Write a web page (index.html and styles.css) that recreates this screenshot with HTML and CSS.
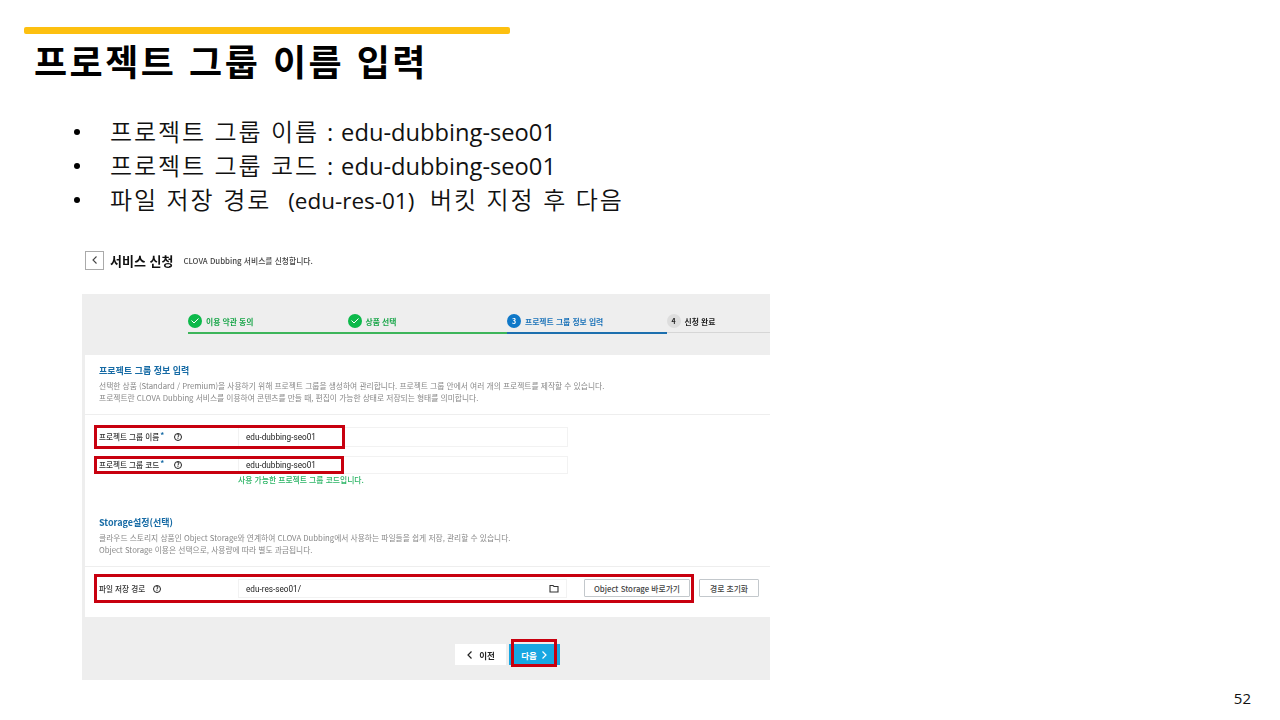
FILE: index.html
```html
<!DOCTYPE html>
<html lang="ko">
<head>
<meta charset="utf-8">
<title>프로젝트 그룹 이름 입력</title>
<link rel="stylesheet" href="styles.css">
</head>
<body>
<main class="slide">
  <div class="accent"></div>
  <h1 class="title">프로젝트 그룹 이름 입력</h1>
  <ul class="points">
    <li>프로젝트 그룹 이름<span class="latin colon">:</span><span class="latin">edu-dubbing-seo01</span></li>
    <li>프로젝트 그룹 코드<span class="latin colon">:</span><span class="latin">edu-dubbing-seo01</span></li>
    <li>파일 저장 경로<span class="latin paren">(edu-res-01)</span> 버킷 지정 후 다음</li>
  </ul>

  <section class="shot">
    <header class="shot-head">
      <span class="back"><svg width="10" height="10" viewBox="0 0 10 10"><path d="M6.5 1.5 3 5l3.5 3.5" fill="none" stroke="#444" stroke-width="1.1"/></svg></span>
      <strong class="shot-title">서비스 신청</strong>
      <span class="shot-sub">CLOVA Dubbing 서비스를 신청합니다.</span>
    </header>

    <div class="panel">
      <ol class="steps">
        <li class="step done">
          <span class="dot"><svg width="10" height="8" viewBox="0 0 10 8"><path d="M1.5 3.5 4 6l4.5-4.5" fill="none" stroke="#fff" stroke-width="1"/></svg></span>이용 약관 동의
        </li>
        <li class="step done">
          <span class="dot"><svg width="10" height="8" viewBox="0 0 10 8"><path d="M1.5 3.5 4 6l4.5-4.5" fill="none" stroke="#fff" stroke-width="1"/></svg></span>상품 선택
        </li>
        <li class="step current"><span class="dot">3</span>프로젝트 그룹 정보 입력</li>
        <li class="step todo"><span class="dot">4</span>신청 완료</li>
      </ol>

      <div class="card">
        <div class="intro intro-first">
          <h2>프로젝트 그룹 정보 입력</h2>
          <p>선택한 상품 (Standard / Premium)을 사용하기 위해 프로젝트 그룹을 생성하여 관리합니다. 프로젝트 그룹 안에서 여러 개의 프로젝트를 제작할 수 있습니다.</p>
          <p>프로젝트란 CLOVA Dubbing 서비스를 이용하여 콘텐츠를 만들 때, 편집이 가능한 상태로 저장되는 형태를 의미합니다.</p>
        </div>

        <div class="fields">
          <div class="row">
            <span class="label">프로젝트 그룹 이름<b>*</b></span><span class="help">?</span>
            <span class="input">edu-dubbing-seo01</span>
            <span class="mark mark-name"></span>
          </div>
          <div class="row row-code">
            <span class="label">프로젝트 그룹 코드<b>*</b></span><span class="help">?</span>
            <span class="input">edu-dubbing-seo01</span>
            <span class="mark mark-code"></span>
          </div>
          <p class="ok">사용 가능한 프로젝트 그룹 코드입니다.</p>
        </div>

        <div class="intro intro-storage">
          <h2>Storage설정(선택)</h2>
          <p>클라우드 스토리지 상품인 Object Storage와 연계하여 CLOVA Dubbing에서 사용하는 파일들을 쉽게 저장, 관리할 수 있습니다.</p>
          <p>Object Storage 이용은 선택으로, 사용량에 따라 별도 과금됩니다.</p>
        </div>

        <div class="row row-path">
          <span class="label label-path">파일 저장 경로</span><span class="help">?</span>
          <span class="input input-path">edu-res-seo01/
            <svg width="10" height="9" viewBox="0 0 10 9"><path d="M1 1.5h3l1 1h4v5.500H1z" fill="none" stroke="#333" stroke-width="1.100"/></svg>
          </span>
          <span class="btn btn-storage">Object Storage 바로가기</span>
          <span class="btn btn-reset">경로 초기화</span>
          <span class="mark mark-path"></span>
        </div>
      </div>

      <div class="actions">
        <span class="prev"><svg width="8" height="10" viewBox="0 0 8 10"><path d="M5.500 1.500 2 5l3.500 3.500" fill="none" stroke="#222" stroke-width="1.200"/></svg>이전</span>
        <span class="next">다음<svg width="8" height="10" viewBox="0 0 8 10"><path d="M2.500 1.500 6 5 2.500 8.500" fill="none" stroke="#fff" stroke-width="1.200"/></svg><span class="mark mark-next"></span></span>
      </div>
    </div>
  </section>

  <footer class="page-no">52</footer>
</main>
</body>
</html>
```
FILE: styles.css
```css
* { box-sizing: border-box; }
html, body { margin: 0; padding: 0; }
body {
  width: 1280px;
  height: 720px;
  overflow: hidden;
  background: #fff;
  font-family: "Noto Sans CJK KR", "Noto Sans", sans-serif;
  color: #000;
}
.slide { position: relative; width: 1280px; height: 720px; padding: 27px 0 0 0; }
.accent { width: 486px; height: 7px; margin-left: 24px; background: #fdc010; border-radius: 2px; }
.title {
  margin: 1px 0 0 34px;
  font-size: 36px;
  line-height: 50px;
  font-weight: 700;
  letter-spacing: 2.500px;
  color: #000;
}
.points {
  list-style: none;
  margin: 29px 0 0 0;
  padding: 0 0 0 110px;
  font-size: 24px;
  line-height: 34px;
  color: #111;
}
.points li { position: relative; height: 34px; letter-spacing: 1.900px; white-space: nowrap; font-weight: 350; }
.points li::before {
  content: "";
  position: absolute;
  left: -36px;
  top: 15px;
  width: 6px;
  height: 6px;
  border-radius: 50%;
  background: #000;
}
.latin { font-family: "Open Sans", sans-serif; letter-spacing: 0; font-size: 23.700px; font-weight: 400; }
.colon { display: inline-block; width: 22px; text-align: center; }
.paren { margin: 0 7px 0 17px; font-size: 22.500px; }

.shot { margin: 34px 0 0 82px; width: 688px; filter: blur(0.35px); }
.shot-head { display: flex; align-items: center; height: 20px; margin-left: 3px; }
.back {
  display: flex; align-items: center; justify-content: center;
  width: 19px; height: 19px;
  border: 1px solid #aaa; background: #fff;
}
.shot-title { margin-left: 6px; font-size: 13px; font-weight: 700; color: #111; }
.shot-sub { margin-left: 10px; font-size: 7.800px; font-weight: 500; color: #444; }

.panel { margin-top: 24px; height: 386px; background: #eee; display: flex; flex-direction: column; }

.steps {
  list-style: none;
  display: grid;
  grid-template-columns: repeat(3, 159.500px) 1fr;
  align-items: start;
  height: 41px;
  margin: 20px 0 0 106px;
  padding: 0;
}
.step {
  display: flex; align-items: flex-start; gap: 4px;
  font-size: 7.800px; font-weight: 700; line-height: 15px;
  height: 20px;
  border-bottom: 2px solid transparent;
}
.dot {
  display: flex; align-items: center; justify-content: center;
  width: 14px; height: 14px; border-radius: 50%;
  font-size: 7px; font-weight: 700; color: #fff;
}
.done { color: #1aa64a; border-bottom-color: #3db55a; }
.done .dot { background: #0cb94a; }
.current { color: #1a72b8; border-bottom-color: #1c6fae; }
.current .dot { background: #0f78c8; }
.todo { color: #222; border-bottom: 1px solid #d6d6d6; height: 19px; }
.todo .dot { background: #ddd; color: #222; }

.card { margin-left: 3px; height: 262px; background: #fff; flex: none; }
.intro { color: #888; font-size: 7.750px; line-height: 12px; padding-left: 14px; }
.intro h2 { margin: 0 0 3px; font-size: 9px; line-height: 13px; font-weight: 700; color: #176ba5; }
.intro p { margin: 0; white-space: nowrap; }
.intro-first { padding-top: 9px; height: 60px; border-bottom: 1px solid #eee; }
.intro-storage { height: 51px; margin-bottom: 0; border-bottom: 1px solid #eee; padding-top: 0; }

.fields { height: 101px; padding-top: 12px; }
.row { position: relative; display: flex; align-items: center; height: 20px; padding-left: 14px; font-size: 7.600px; color: #333; }
.row-code { margin-top: 9px; height: 18px; }
.label { width: 75px; font-weight: 500; white-space: nowrap; line-height: 12px; }
.label b { color: #176ba5; font-size: 8px; line-height: 0; position: relative; top: -2px; margin-left: 1px; }
.label-path { width: 54px; }
.help {
  width: 8px; height: 8px; border: 1px solid #222; border-radius: 50%;
  display: flex; align-items: center; justify-content: center;
  font-size: 6px; line-height: 1; font-weight: 700; color: #222;
}
.input {
  position: absolute; left: 153px; top: 0; width: 330px; height: 100%;
  display: flex; align-items: center; justify-content: space-between;
  padding: 0 7px; border: 1px solid #f2f2f2;
  font-family: "Roboto", sans-serif; font-size: 8.200px; color: #222;
}
.ok { margin: 0 0 0 153px; font-size: 7.800px; font-weight: 500; color: #2bb565; line-height: 11px; }

.row-path { height: 19px; }
.card .row-path { margin-top: 12px; }
.input-path { width: 329px; }
.btn {
  position: absolute; top: 0; height: 18px;
  display: flex; align-items: center; justify-content: center;
  border: 1px solid #c3c8cc; background: #fff; border-radius: 1px;
  font-size: 7.800px; font-weight: 500; color: #444; white-space: nowrap;
}
.btn-storage { left: 499px; width: 106px; }
.btn-reset { left: 614px; width: 60px; }

.mark { position: absolute; border: 3px solid #c8000f; pointer-events: none; }
.mark-name { left: 9px; top: -2px; width: 251px; height: 24px; }
.mark-code { left: 9px; top: 0; width: 250px; height: 18px; }
.mark-path { left: 9px; top: -5px; width: 600px; height: 29px; }

.actions { flex: 1; display: flex; justify-content: center; align-items: flex-start; padding: 27px 0 0 163px; }
.prev, .next {
  display: flex; align-items: center; justify-content: center;
  height: 21px; font-size: 8.500px; font-weight: 700;
}
.prev { width: 51px; gap: 5px; background: #fff; color: #222; }
.next { position: relative; width: 51px; margin-left: 3px; gap: 3px; background: #18a7e2; color: #fff; }
.mark-next { left: 2px; top: -5px; width: 46px; height: 28px; }

.page-no {
  position: absolute; right: 29px; bottom: 12px;
  font-family: "Open Sans", sans-serif; font-size: 15px; line-height: 20px; color: #111;
}
```
